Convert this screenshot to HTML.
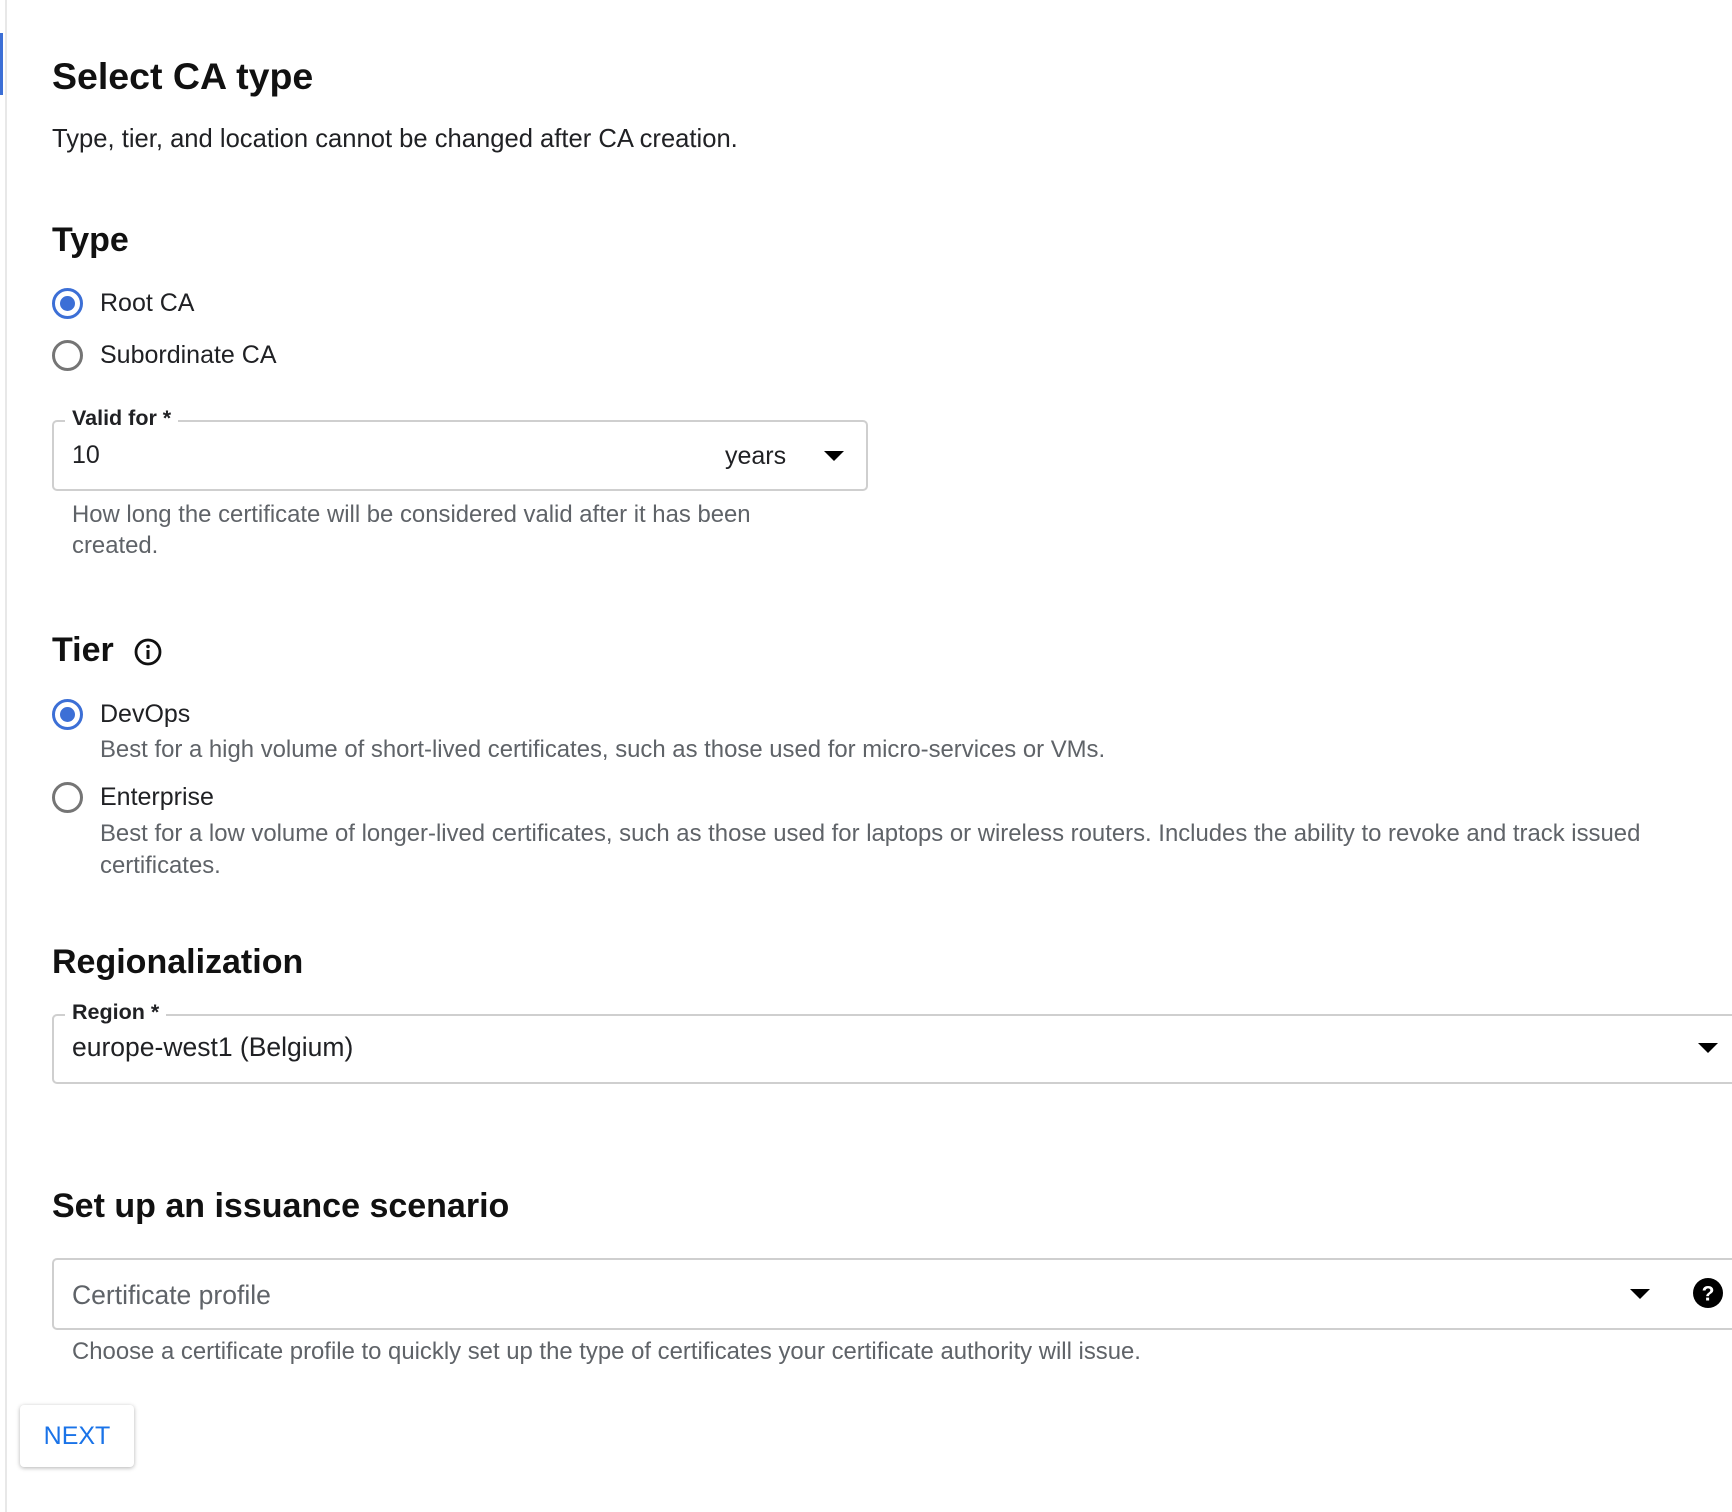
<!DOCTYPE html>
<html><head><meta charset="utf-8"><style>
*{margin:0;padding:0;box-sizing:border-box}
body{width:1732px;height:1512px;background:#fff;position:relative;overflow:hidden;font-family:"Liberation Sans",Arial,sans-serif;color:#202124}
.a{position:absolute;white-space:nowrap}
.h{font-weight:bold;color:#111}
.t{font-size:25px;line-height:28px}
.g{color:#5f6368;font-size:23.9px;line-height:32px}
.r{position:absolute;width:31px;height:31px;border-radius:50%;border:3px solid #757575}
.r.on{border-color:#3c6fd6}
.r.on::after{content:"";position:absolute;left:5px;top:5px;width:15px;height:15px;border-radius:50%;background:#3c6fd6}
.box{position:absolute;border:2px solid #cfcfcf;border-radius:5px}
.lab{position:absolute;background:#fff;padding:0 7px;font-size:21.5px;font-weight:bold;color:#202124;line-height:24px}
.tri{position:absolute;width:0;height:0;border-left:10px solid transparent;border-right:10px solid transparent;border-top:10px solid #000}
</style></head><body>
<div class="a" style="left:5px;top:0;width:2px;height:1512px;background:#e8e8e8"></div>
<div class="a" style="left:0;top:33px;width:3px;height:62px;background:#3c6fd6"></div>

<div class="a h" style="left:52px;top:52px;font-size:37.5px;line-height:48px">Select CA type</div>
<div class="a" style="left:52px;top:124px;font-size:25.6px;line-height:30px">Type, tier, and location cannot be changed after CA creation.</div>

<div class="a h" style="left:52px;top:220px;font-size:34px;line-height:40px">Type</div>
<div class="r on" style="left:52px;top:288px"></div>
<div class="a t" style="left:100px;top:289px">Root CA</div>
<div class="r" style="left:52px;top:340px"></div>
<div class="a t" style="left:100px;top:341px">Subordinate CA</div>

<div class="box" style="left:52px;top:420px;width:816px;height:71px"></div>
<div class="lab" style="left:65px;top:406px">Valid for *</div>
<div class="a t" style="left:72px;top:441px">10</div>
<div class="a t" style="left:725px;top:442px">years</div>
<div class="tri" style="left:824px;top:451px"></div>
<div class="a g" style="left:72px;top:499px">How long the certificate will be considered valid after it has been</div>
<div class="a g" style="left:72px;top:530px">created.</div>

<div class="a h" style="left:52px;top:630px;font-size:34px;line-height:40px">Tier</div>
<svg class="a" style="left:133px;top:637px" width="30" height="30" viewBox="0 0 30 30"><circle cx="15" cy="15" r="12" fill="none" stroke="#111" stroke-width="2.8"/><rect x="13.5" y="13" width="3" height="9" fill="#111"/><circle cx="15" cy="9.5" r="1.8" fill="#111"/></svg>
<div class="r on" style="left:52px;top:699px"></div>
<div class="a t" style="left:100px;top:700px">DevOps</div>
<div class="a g" style="left:100px;top:734px">Best for a high volume of short-lived certificates, such as those used for micro-services or VMs.</div>
<div class="r" style="left:52px;top:782px"></div>
<div class="a t" style="left:100px;top:783px">Enterprise</div>
<div class="a g" style="left:100px;top:818px">Best for a low volume of longer-lived certificates, such as those used for laptops or wireless routers. Includes the ability to revoke and track issued</div>
<div class="a g" style="left:100px;top:850px">certificates.</div>

<div class="a h" style="left:52px;top:942px;font-size:34px;line-height:40px">Regionalization</div>
<div class="box" style="left:52px;top:1014px;width:1720px;height:70px"></div>
<div class="lab" style="left:65px;top:1000px">Region *</div>
<div class="a" style="left:72px;top:1033px;font-size:26.5px;line-height:28px">europe-west1 (Belgium)</div>
<div class="tri" style="left:1698px;top:1043px"></div>

<div class="a h" style="left:52px;top:1186px;font-size:34px;line-height:40px">Set up an issuance scenario</div>
<div class="box" style="left:52px;top:1258px;width:1720px;height:72px"></div>
<div class="a" style="left:72px;top:1281px;color:#5f6368;font-size:26.5px;line-height:28px">Certificate profile</div>
<div class="tri" style="left:1630px;top:1289px"></div>
<svg class="a" style="left:1693px;top:1278px" width="30" height="30" viewBox="0 0 30 30"><circle cx="15" cy="15" r="15" fill="#000"/><text x="15" y="22.5" text-anchor="middle" font-family="Liberation Sans" font-weight="bold" font-size="21" fill="#fff">?</text></svg>
<div class="a g" style="left:72px;top:1336px">Choose a certificate profile to quickly set up the type of certificates your certificate authority will issue.</div>

<div class="a" style="left:20px;top:1405px;width:114px;height:62px;border-radius:4px;box-shadow:0 1px 4px rgba(0,0,0,.3);background:#fff;color:#1a73e8;font-size:25px;line-height:62px;text-align:center">NEXT</div>
</body></html>
